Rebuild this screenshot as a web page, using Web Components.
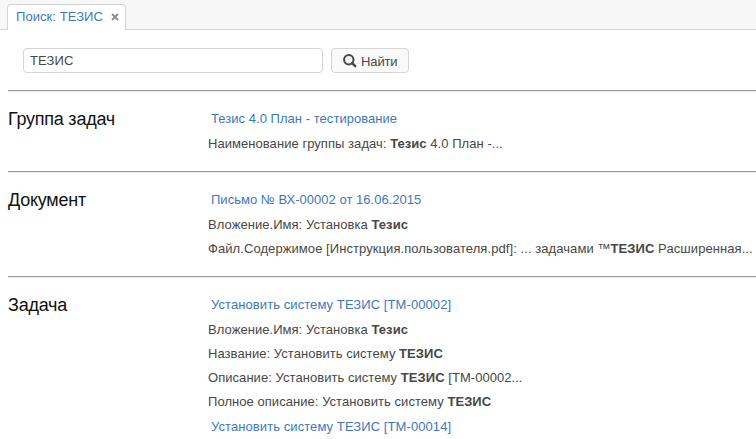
<!DOCTYPE html>
<html lang="ru">
<head>
<meta charset="utf-8">
<title>Поиск: ТЕЗИС</title>
<style>
html, body { margin: 0; height: 100%; overflow: hidden; background: #fff; }
body { font: 13px/24px "Liberation Sans", Arial, sans-serif; color: #474747; }
</style>
</head>
<body>
<search-page></search-page>
<script>
function define(name, html) {
  customElements.define(name, class extends HTMLElement {
    constructor() {
      super();
      this.attachShadow({ mode: 'open' }).innerHTML = html;
    }
  });
}

define('tab-bar', `
<style>
:host { display: flex; height: 30px; box-sizing: border-box; padding: 4px 0 0 7px; background: #f7f7f7; border-bottom: 1px solid #d5d5d5; }
.tab { display: flex; box-sizing: border-box; width: 119px; height: 26px; padding-left: 8px; border: 1px solid #d5d5d5; border-bottom: 0; border-radius: 4px 4px 0 0; background: #fff; color: #3d78bd; line-height: 24px; white-space: nowrap; letter-spacing: .07px; }
.label { width: 95px; }
svg { width: 8px; height: 8px; margin-top: 8px; }
</style>
<div class="tab"><span class="label"><slot></slot></span><svg viewBox="0 0 8 8"><path d="M1 1 7 7M7 1 1 7" stroke="#8e8e8e" stroke-width="2" fill="none"/></svg></div>`);

define('search-field', `
<style>
:host { display: block; box-sizing: border-box; width: 300px; height: 25px; padding-left: 6px; border: 1px solid #d5d5d5; border-radius: 4px; background: #fff; line-height: 23px; letter-spacing: .1px; }
</style><slot></slot>`);

define('search-button', `
<style>
:host { display: flex; box-sizing: border-box; width: 78px; height: 25px; padding-left: 11px; border: 1px solid #d5d5d5; border-radius: 4px; background: #f9f9f9; line-height: 25px; letter-spacing: -.12px; }
svg { width: 14px; height: 14px; margin: 5px 4px 0 0; }
</style>
<svg viewBox="0 0 14 14"><g fill="none" stroke="#474747"><circle cx="5.8" cy="5.8" r="4.7" stroke-width="2"/><path d="M9.2 9.2 12.2 12.2" stroke-width="2.4" stroke-linecap="round"/></g></svg><span><slot></slot></span>`);

define('result-link', `
<style>
:host { display: block; height: 26px; padding-left: 3px; line-height: 25px; color: #3d78bd; white-space: nowrap; }
</style><span><slot></slot></span>`);

define('result-line', `
<style>
:host { display: block; height: 24px; line-height: 24px; white-space: nowrap; letter-spacing: .05px; }
</style><span><slot></slot></span>`);

define('result-group', `
<style>
:host { display: grid; grid-template-columns: 200px 1fr; margin-left: 8px; padding: 15px 0 15px; border-top: 1px solid #999; box-shadow: inset 0 1px #eee; }
.title { font-size: 18px; line-height: 27px; color: #111; letter-spacing: -.24px; }
</style>
<div class="title"><slot name="title"></slot></div><div><slot></slot></div>`);

define('search-page', `
<style>
:host { display: block; }
.form { display: flex; gap: 8px; height: 42px; padding: 18px 0 0 23px; }
.task { letter-spacing: .08px; }
.file { letter-spacing: .075px; }
</style>
<tab-bar>Поиск: ТЕЗИС</tab-bar>
<div class="form"><search-field>ТЕЗИС</search-field><search-button>Найти</search-button></div>
<result-group><span slot="title">Группа задач</span>
<result-link style="letter-spacing:.04px">Тезис 4.0 План - тестирование</result-link>
<result-line>Наименование группы задач: <b>Тезис</b> 4.0 План -...</result-line></result-group>
<result-group><span slot="title">Документ</span>
<result-link style="letter-spacing:.02px">Письмо № ВХ-00002 от 16.06.2015</result-link>
<result-line>Вложение.Имя: Установка <b>Тезис</b></result-line>
<result-line class="file">Файл.Содержимое [Инструкция.пользователя.pdf]: ... задачами ™<b>ТЕЗИС</b> Расширенная...</result-line></result-group>
<result-group><span slot="title">Задача</span>
<result-link class="task">Установить систему ТЕЗИС [ТМ-00002]</result-link>
<result-line>Вложение.Имя: Установка <b>Тезис</b></result-line>
<result-line>Название: Установить систему <b>ТЕЗИС</b></result-line>
<result-line>Описание: Установить систему <b>ТЕЗИС</b> [ТМ-00002...</result-line>
<result-line>Полное описание: Установить систему <b>ТЕЗИС</b></result-line>
<result-link class="task">Установить систему ТЕЗИС [ТМ-00014]</result-link></result-group>`);
</script>
</body>
</html>
